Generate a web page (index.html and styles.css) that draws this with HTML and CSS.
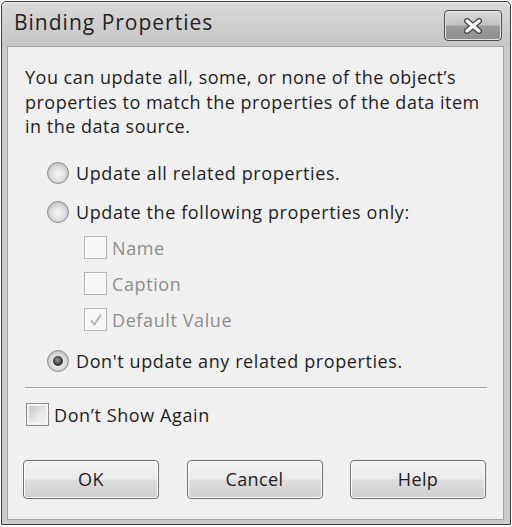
FILE: index.html
```html
<!DOCTYPE html>
<html lang="en">
<head>
  <meta charset="UTF-8">
  <meta name="viewport" content="width=device-width, initial-scale=1.0">
  <title>Binding Properties</title>
  <link rel="stylesheet" href="styles.css">
</head>
<body>
  <div class="window">
    <div class="titlebar">
      <span class="title">Binding Properties</span>
      <button class="close" aria-label="Close">
        <svg width="22" height="16" viewBox="0 0 22 16">
          <path d="M5 3 L17 13 M17 3 L5 13" stroke="#4a4a4a" stroke-width="6" stroke-linecap="round"/>
          <path d="M5 3 L17 13 M17 3 L5 13" stroke="#fff" stroke-width="3.4" stroke-linecap="round"/>
        </svg>
      </button>
    </div>

    <div class="client">
      <p class="intro">You can update all, some, or none of the object’s properties to match the properties of the data item in the data source.</p>

      <div class="options">
        <label class="row radio-row">
          <span class="radio"></span>
          <span>Update all related properties.</span>
        </label>
        <label class="row radio-row second">
          <span class="radio"></span>
          <span>Update the following properties only:</span>
        </label>
        <label class="row check-row disabled">
          <span class="check"></span>
          <span>Name</span>
        </label>
        <label class="row check-row disabled">
          <span class="check"></span>
          <span>Caption</span>
        </label>
        <label class="row check-row disabled">
          <span class="check">
            <svg width="16" height="16" viewBox="0 0 16 16">
              <path d="M3 8.5 L6.5 12.5 L13 2.5" fill="none" stroke="#a8a8a8" stroke-width="1.6"/>
            </svg>
          </span>
          <span>Default Value</span>
        </label>
        <label class="row radio-row last">
          <span class="radio selected"></span>
          <span>Don't update any related properties.</span>
        </label>
      </div>

      <hr class="sep">

      <label class="row dont-show">
        <span class="check active"></span>
        <span>Don’t Show Again</span>
      </label>

      <div class="buttons">
        <button class="btn">OK</button>
        <button class="btn">Cancel</button>
        <button class="btn">Help</button>
      </div>
    </div>
  </div>
</body>
</html>
```

FILE: styles.css
```css
body {
  margin: 0;
  background: #fff;
  font-family: "Open Sans", "Noto Sans", sans-serif;
  color: #1e1e1e;
}
.window {
  width: 508px;
  height: 522px;
  margin: 1px 0 0 1px;
  border: 1px solid #3c3c3c;
  border-radius: 5px 5px 0 0;
  background: #cbcbcb;
  display: flex;
  flex-direction: column;
}
.titlebar {
  height: 44px;
  flex-shrink: 0;
  position: relative;
  background: linear-gradient(#dadada, #cdcdcd 60%, #c6c6c6);
  border-radius: 5px 5px 0 0;
  box-shadow: inset 0 1px 0 #ededed;
}
.title {
  position: absolute;
  left: 12px;
  top: 6px;
  font-size: 21px;
  letter-spacing: 1px;
  color: #222;
}
.close {
  position: absolute;
  left: 442px;
  top: 8px;
  width: 58px;
  height: 31px;
  padding: 0;
  border: 1px solid #4c4c4c;
  border-radius: 4px;
  background: linear-gradient(#d9d9d9, #c3c3c3 48%, #9a9a9a 52%, #8f8f8f);
  box-shadow: inset 0 0 0 1px #e4e4e4;
  display: flex;
  align-items: center;
  justify-content: center;
}
.client {
  flex: 1;
  margin: 0 6px 4px 5px;
  border: 1px solid #a3a3a3;
  background: #f0f0f0;
  padding: 18px 17px 0 17px;
  display: flex;
  flex-direction: column;
}
.intro {
  margin: 0;
  font-size: 18px;
  line-height: 24.5px;
  letter-spacing: 0.5px;
}
.options {
  margin-top: 19px;
  display: flex;
  flex-direction: column;
  gap: 6px;
}
.row {
  height: 30px;
  display: flex;
  align-items: center;
  font-size: 18px;
  letter-spacing: 0.6px;
}
.radio-row {
  padding-left: 22px;
  gap: 7px;
}
.radio-row.second {
  margin-top: 3px;
}
.radio-row.last {
  margin-top: 5px;
}
.radio {
  width: 22px;
  height: 22px;
  flex-shrink: 0;
  box-sizing: border-box;
  border-radius: 50%;
  border: 1px solid #8c8c8c;
  background: radial-gradient(circle at 50% 55%, #f6f6f6 0, #e0e0e0 45%, #c4c4c4 70%, #dedede 100%);
  position: relative;
}
.radio.selected::after {
  content: "";
  position: absolute;
  left: 5px;
  top: 5px;
  width: 10px;
  height: 10px;
  border-radius: 50%;
  background: radial-gradient(circle at 45% 40%, #9a9a9a 0, #3a3a3a 55%, #1e1e1e 100%);
}
.check-row {
  padding-left: 59px;
  gap: 5px;
}
.check-row.disabled {
  color: #8d8d8d;
}
.check {
  width: 23px;
  height: 23px;
  flex-shrink: 0;
  box-sizing: border-box;
  border: 1px solid #b4b4b4;
  background: #f6f6f6;
  box-shadow: inset 0 0 0 1px #fbfbfb;
  display: flex;
  align-items: center;
  justify-content: center;
}
.check.active {
  border-color: #8a8a8a;
  background: linear-gradient(135deg, #c2c2c2, #e9e9e9 60%, #f4f4f4);
  box-shadow: inset 0 0 0 2px #f4f4f4;
}
.sep {
  margin: 11px -1px 0 0;
  border: 0;
  border-top: 1px solid #a0a0a0;
  border-bottom: 1px solid #fbfbfb;
}
.dont-show {
  margin-top: 11px;
  padding-left: 1px;
  gap: 5px;
}
.buttons {
  margin: 30px 0 0 -2px;
  display: flex;
  justify-content: space-between;
}
.btn {
  width: 136px;
  height: 39px;
  border: 1px solid #707070;
  border-radius: 4px;
  background: linear-gradient(#f3f3f3, #ebebeb 48%, #dddddd 52%, #d0d0d0);
  box-shadow: inset 0 0 0 1px #fcfcfc;
  font-family: "Open Sans", "Noto Sans", sans-serif;
  font-size: 18px;
  letter-spacing: 0.4px;
  color: #1e1e1e;
  padding: 0;
}
```
